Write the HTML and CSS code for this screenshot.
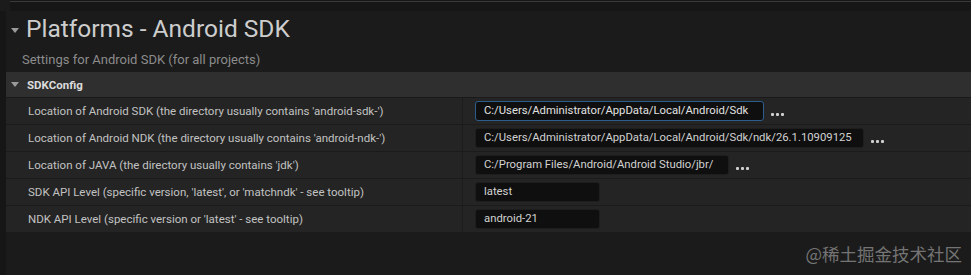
FILE: index.html
```html
<!DOCTYPE html>
<html lang="en">
<head>
  <meta charset="UTF-8" />
  <title>Platforms - Android SDK</title>
  <link rel="stylesheet" href="styles.css">
</head>
<body>

  <div class="top-line"></div>

  <div class="panel">
    <div class="title">
      <span class="arrow big"></span>
      Platforms - Android SDK
    </div>
    <div class="subtitle">Settings for Android SDK (for all projects)</div>

    <div class="section">
      <div class="section-head">
        <span class="arrow"></span>
        SDKConfig
      </div>

      <div class="row">
        <div class="label">Location of Android SDK (the directory usually contains 'android-sdk-')</div>
        <div class="value">
          <div class="field focus w-sdk">C:/Users/Administrator/AppData/Local/Android/Sdk</div>
          <span class="dots"><i></i><i></i><i></i></span>
        </div>
      </div>

      <div class="row">
        <div class="label">Location of Android NDK (the directory usually contains 'android-ndk-')</div>
        <div class="value">
          <div class="field w-ndk">C:/Users/Administrator/AppData/Local/Android/Sdk/ndk/26.1.10909125</div>
          <span class="dots"><i></i><i></i><i></i></span>
        </div>
      </div>

      <div class="row">
        <div class="label">Location of JAVA (the directory usually contains 'jdk')</div>
        <div class="value">
          <div class="field w-java">C:/Program Files/Android/Android Studio/jbr/</div>
          <span class="dots"><i></i><i></i><i></i></span>
        </div>
      </div>

      <div class="row">
        <div class="label">SDK API Level (specific version, 'latest', or 'matchndk' - see tooltip)</div>
        <div class="value">
          <div class="field w-short">latest</div>
        </div>
      </div>

      <div class="row">
        <div class="label">NDK API Level (specific version or 'latest' - see tooltip)</div>
        <div class="value">
          <div class="field w-short">android-21</div>
        </div>
      </div>
    </div>

    <div class="watermark">@稀土掘金技术社区</div>
  </div>

</body>
</html>
```

FILE: styles.css
```css
body {
  margin: 0;
  background-color: #1b1b1b;
  font-family: Roboto, 'Noto Sans', sans-serif;
  color: #c4c4c4;
  height: 275px;
  overflow: hidden;
}

.top-line {
  height: 1px;
  margin-left: 10px;
  background-color: #3a3a3a;
  border-top: 1px solid #161616;
  border-bottom: 9px solid #161616;
}

.panel {
  position: relative;
  height: 264px;
  border-left: 6px solid #161616;
}

.title {
  display: flex;
  align-items: center;
  gap: 7px;
  height: 35px;
  padding-left: 5px;
  font-size: 24.5px;
  color: #cdcdcd;
}

.subtitle {
  padding-left: 16px;
  height: 26px;
  line-height: 27px;
  font-size: 13px;
  color: #8c8c8c;
}

.arrow {
  width: 0;
  height: 0;
  border-left: 4.5px solid transparent;
  border-right: 4.5px solid transparent;
  border-top: 5px solid #9a9a9a;
}

.arrow.big {
  margin-top: 4px;
}

.section-head {
  display: flex;
  align-items: center;
  gap: 8px;
  height: 25px;
  padding-left: 5px;
  background-color: #2f2f2f;
  border-bottom: 1px solid #1a1a1a;
  font-size: 11.5px;
  font-weight: bold;
  color: #dcdcdc;
}

.row {
  display: flex;
  height: 26px;
  background-color: #242424;
  border-bottom: 1px solid #1b1b1b;
}

.label {
  width: 434px;
  padding-left: 22px;
  display: flex;
  align-items: center;
  font-size: 11.5px;
  color: #c2c2c2;
  border-right: 1px solid #1c1c1c;
}

.value {
  display: flex;
  align-items: center;
  padding-left: 12px;
}

.field {
  box-sizing: border-box;
  flex-shrink: 0;
  height: 20px;
  padding: 0 8px;
  line-height: 17px;
  font-size: 11.3px;
  color: #d2d2d2;
  background-color: #0f0f0f;
  border: 1px solid #1e1e1e;
  border-radius: 3px;
  white-space: nowrap;
  overflow: hidden;
}

.field.focus {
  border-color: #2c5d8f;
  color: #e2e2e2;
}

.w-sdk { width: 289px; }
.w-ndk { width: 389px; }
.w-java { width: 254px; }
.w-short { width: 125px; }

.dots {
  display: flex;
  gap: 2px;
  margin-left: 7px;
  margin-top: 7px;
}

.dots i {
  width: 3px;
  height: 3px;
  border-radius: 1px;
  background-color: #cfcfcf;
}

.watermark {
  position: absolute;
  right: 9px;
  bottom: 9px;
  font-family: 'Noto Sans CJK SC', sans-serif;
  font-size: 17.5px;
  color: #747474;
}
```
